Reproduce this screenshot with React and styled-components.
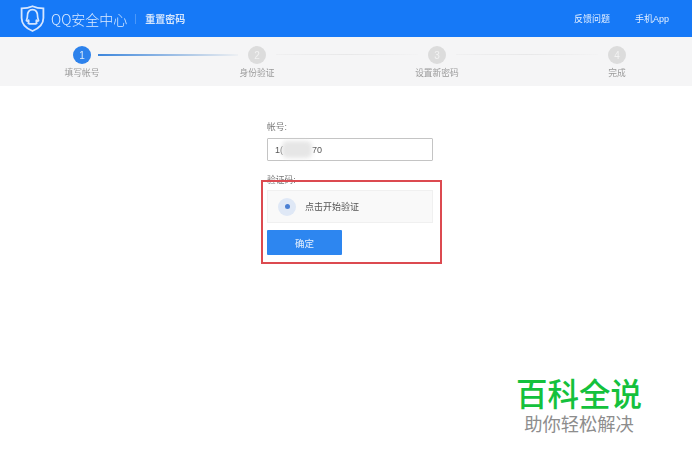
import React from 'react'
import styled, { createGlobalStyle } from 'styled-components'

const GlobalStyle = createGlobalStyle`
  html, body { margin: 0; padding: 0; background: #fff; }
  body { font-family: "Liberation Sans", "Noto Sans CJK SC", sans-serif; }
`

const Page = styled.div`
  position: relative;
  width: 692px;
  height: 468px;
  overflow: hidden;
  background: #fff;
`

const Header = styled.header`
  display: flex;
  align-items: center;
  height: 37px;
  padding: 0 23px 0 20px;
  background: #1679f7;
  color: #fff;
  filter: blur(0.35px);
`

const Brand = styled.div`
  margin-left: 6px;
  font-size: 14px;
  font-family: "Noto Sans CJK SC", sans-serif;
  font-weight: 300;
  color: #dcebff;
`

const Divider = styled.span`
  width: 1px;
  height: 10px;
  margin: 0 9px 0 8px;
  background: #4b98f9;
`

const Sub = styled.div`
  font-size: 10px;
  font-weight: 700;
  color: #d5e6fd;
`

const Nav = styled.nav`
  display: flex;
  gap: 25px;
  margin-left: auto;
  font-size: 9px;
  color: #e3efff;
`

const Steps = styled.div`
  position: relative;
  display: grid;
  grid-template-columns: 164px 186px 174px 186px;
  height: 49px;
  background: #f5f5f6;
  filter: blur(0.35px);
`

const Step = styled.div`
  display: flex;
  flex-direction: column;
  align-items: center;
  padding-top: 9px;
`

const Dot = styled.div`
  display: flex;
  align-items: center;
  justify-content: center;
  width: 18px;
  height: 18px;
  border-radius: 50%;
  background: ${p => (p.$active ? '#2d82ec' : '#dcdcdc')};
  color: ${p => (p.$active ? '#dcebfb' : '#f2f2f2')};
  font-size: 10px;
`

const StepLabel = styled.div`
  margin-top: 3px;
  font-size: 8.75px;
  line-height: 12px;
  color: #9a9a9a;
`

const Line = styled.div`
  position: absolute;
  top: 17px;
  left: ${p => p.$left}px;
  width: ${p => p.$width}px;
  height: ${p => (p.$active ? 2 : 1)}px;
  background: ${p => (p.$active
    ? 'linear-gradient(90deg, #3d86dc, #b9cfe8 70%, #eef0f3)'
    : 'linear-gradient(90deg, #f0f0f1, #e8e8e9 50%, #f3f3f4)')};
`

const Form = styled.main`
  display: flex;
  flex-direction: column;
  width: 166px;
  margin: 35px 0 0 267px;
  filter: blur(0.35px);
`

const FieldLabel = styled.label`
  font-size: 8.75px;
  line-height: 12px;
  color: #777;
`

const InputBox = styled.div`
  display: flex;
  align-items: center;
  box-sizing: border-box;
  height: 23px;
  margin-top: 5px;
  padding-left: 7px;
  border: 1px solid #c4c4c4;
  border-radius: 1px;
  font-size: 9px;
  color: #555;
`

const Blur = styled.span`
  width: 30px;
  height: 17px;
  margin-left: -1px;
  border-radius: 5px;
  background: #e6e6e6;
  filter: blur(2px);
`

const CodeLabel = styled(FieldLabel)`
  margin-top: 13px;
`

const Captcha = styled.div`
  display: flex;
  align-items: center;
  box-sizing: border-box;
  height: 33px;
  margin-top: 4px;
  padding-left: 10px;
  border: 1px solid #f0f0f0;
  background: #f9f9f9;
  font-size: 9px;
  color: #555;
`

const Radar = styled.span`
  display: flex;
  align-items: center;
  justify-content: center;
  width: 18px;
  height: 18px;
  margin-right: 9px;
  border-radius: 50%;
  background: #dfe8f6;

  &::after {
    content: '';
    width: 5px;
    height: 5px;
    border-radius: 50%;
    background: #4a7fd3;
  }
`

const Submit = styled.button`
  width: 75px;
  height: 25px;
  margin-top: 7px;
  padding: 0;
  border: 0;
  border-radius: 1px;
  background: #2d86f0;
  color: #e6f0fd;
  font-family: inherit;
  font-size: 9.5px;
`

const RedMark = styled.div`
  position: absolute;
  left: 261px;
  top: 180px;
  box-sizing: border-box;
  width: 181px;
  height: 84px;
  border: 2px solid #dc4a50;
`

const Watermark = styled.div`
  position: absolute;
  left: 516px;
  top: 374px;
  width: 126px;
  font-family: "Noto Sans CJK SC", sans-serif;
  text-align: center;
`

const MarkTitle = styled.div`
  font-size: 31.5px;
  line-height: 36px;
  font-weight: 500;
  color: #14c13c;
  white-space: nowrap;
`

const MarkSub = styled.div`
  margin-top: 2px;
  font-size: 18.3px;
  line-height: 22px;
  color: #8d8d8d;
  white-space: nowrap;
`

const Shield = () => (
  <svg width="25" height="27" viewBox="0 0 25 27" fill="none" stroke="#d5e6ff">
    <path d="M12.5 1.2 C9 2.8 5 3.3 1.6 3.3 V13 C1.6 19.5 6.5 23.5 12.5 26 C18.5 23.5 23.4 19.5 23.4 13 V3.3 C20 3.3 16 2.8 12.5 1.2 Z" strokeWidth="1.8" />
    <path d="M6.4 15.6 C6.8 14 7.4 13 7.4 11.4 C7.2 7 9.4 4.6 12.5 4.6 C15.6 4.6 17.8 7 17.6 11.4 C17.6 13 18.2 14 18.6 15.6 C17.6 16.6 17 16 16.4 15.2 C16.2 16.6 15.8 17.2 16.8 18.2 C15 19.4 13.6 18.8 12.5 18.8 C11.4 18.8 10 19.4 8.2 18.2 C9.2 17.2 8.8 16.6 8.6 15.2 C8 16 7.4 16.6 6.4 15.6 Z" strokeWidth="1.7" strokeLinejoin="round" />
  </svg>
)

const stepData = ['填写帐号', '身份验证', '设置新密码', '完成']

const App = () => (
  <Page>
    <GlobalStyle />
    <Header>
      <Shield />
      <Brand>QQ安全中心</Brand>
      <Divider />
      <Sub>重置密码</Sub>
      <Nav>
        <span>反馈问题</span>
        <span>手机App</span>
      </Nav>
    </Header>
    <Steps>
      <Line $active $left={98} $width={140} />
      <Line $left={276} $width={142} />
      <Line $left={456} $width={142} />
      {stepData.map((label, i) => (
        <Step key={label}>
          <Dot $active={i === 0}>{i + 1}</Dot>
          <StepLabel>{label}</StepLabel>
        </Step>
      ))}
    </Steps>
    <Form>
      <FieldLabel>帐号:</FieldLabel>
      <InputBox>
        1(
        <Blur />
        70
      </InputBox>
      <CodeLabel>验证码:</CodeLabel>
      <Captcha>
        <Radar />
        点击开始验证
      </Captcha>
      <Submit>确定</Submit>
    </Form>
    <RedMark />
    <Watermark>
      <MarkTitle>百科全说</MarkTitle>
      <MarkSub>助你轻松解决</MarkSub>
    </Watermark>
  </Page>
)

export default App
